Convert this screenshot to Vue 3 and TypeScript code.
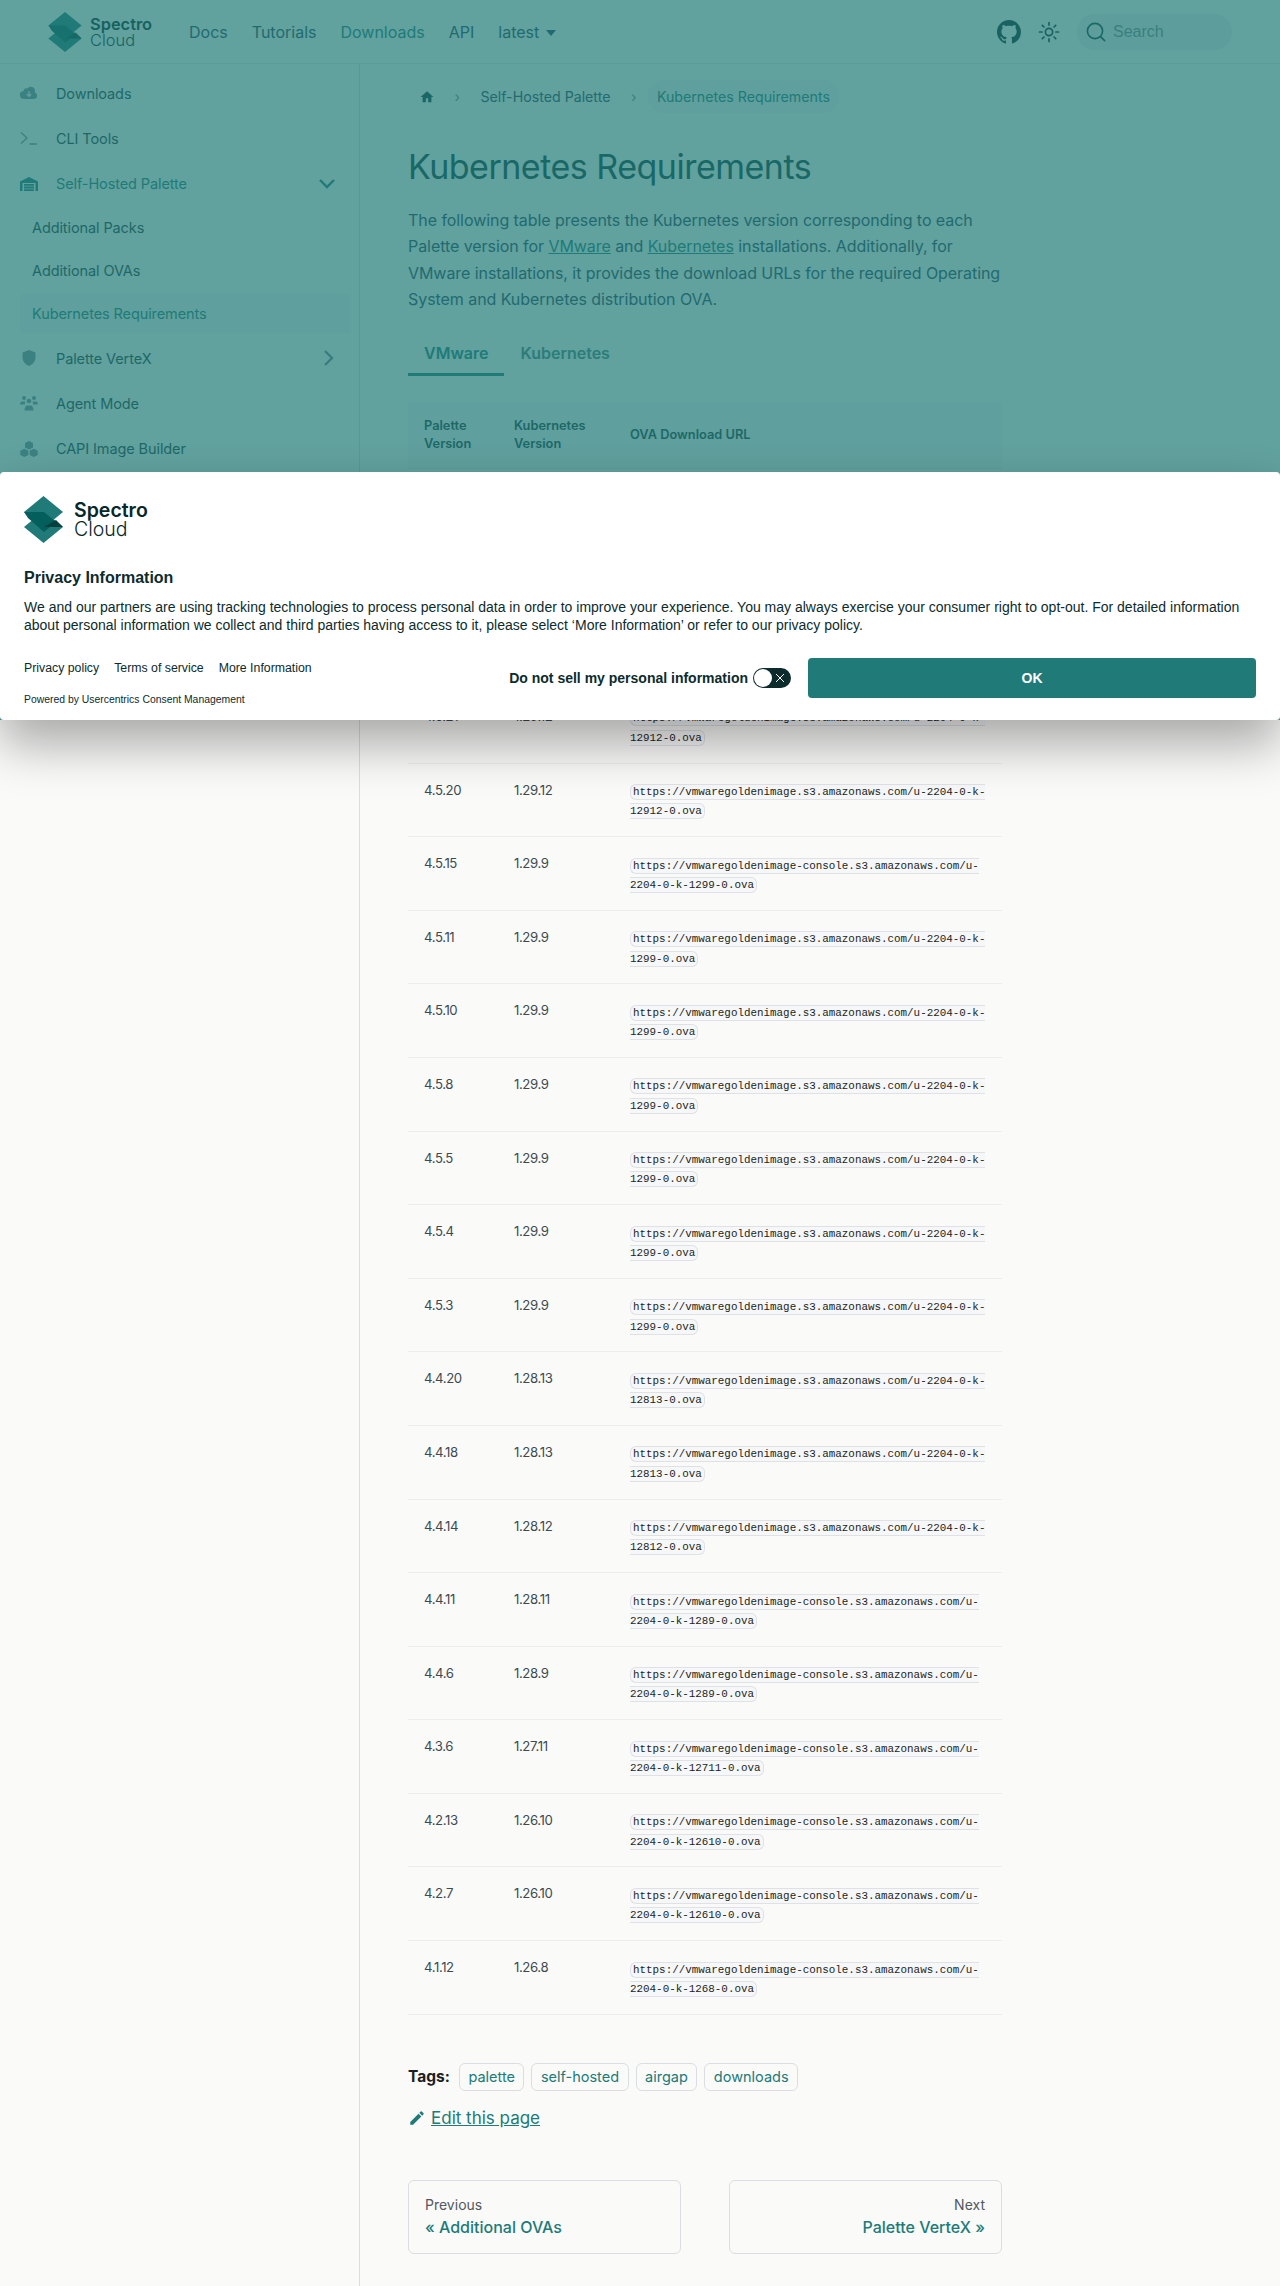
<script setup lang="ts">
interface Row {
  palette: string;
  k8s: string;
  url: string;
}

const S3 = 'https://vmwaregoldenimage.s3.amazonaws.com/u-2204-0-k-';
const CONSOLE = 'https://vmwaregoldenimage-console.s3.amazonaws.com/u-2204-0-k-';

const navLinks = ['Docs', 'Tutorials', 'Downloads', 'API'];

const rows: Row[] = [
  { palette: '4.6.6', k8s: '1.30.4', url: S3 + '13040-0.ova' },
  { palette: '4.5.23', k8s: '1.30.4', url: S3 + '13040-0.ova' },
  { palette: '4.5.22', k8s: '1.29.12', url: S3 + '12912-0.ova' },
  { palette: '4.5.21', k8s: '1.29.12', url: S3 + '12912-0.ova' },
  { palette: '4.5.20', k8s: '1.29.12', url: S3 + '12912-0.ova' },
  { palette: '4.5.15', k8s: '1.29.9', url: CONSOLE + '1299-0.ova' },
  { palette: '4.5.11', k8s: '1.29.9', url: S3 + '1299-0.ova' },
  { palette: '4.5.10', k8s: '1.29.9', url: S3 + '1299-0.ova' },
  { palette: '4.5.8', k8s: '1.29.9', url: S3 + '1299-0.ova' },
  { palette: '4.5.5', k8s: '1.29.9', url: S3 + '1299-0.ova' },
  { palette: '4.5.4', k8s: '1.29.9', url: S3 + '1299-0.ova' },
  { palette: '4.5.3', k8s: '1.29.9', url: S3 + '1299-0.ova' },
  { palette: '4.4.20', k8s: '1.28.13', url: S3 + '12813-0.ova' },
  { palette: '4.4.18', k8s: '1.28.13', url: S3 + '12813-0.ova' },
  { palette: '4.4.14', k8s: '1.28.12', url: S3 + '12812-0.ova' },
  { palette: '4.4.11', k8s: '1.28.11', url: CONSOLE + '1289-0.ova' },
  { palette: '4.4.6', k8s: '1.28.9', url: CONSOLE + '1289-0.ova' },
  { palette: '4.3.6', k8s: '1.27.11', url: CONSOLE + '12711-0.ova' },
  { palette: '4.2.13', k8s: '1.26.10', url: CONSOLE + '12610-0.ova' },
  { palette: '4.2.7', k8s: '1.26.10', url: CONSOLE + '12610-0.ova' },
  { palette: '4.1.12', k8s: '1.26.8', url: CONSOLE + '1268-0.ova' }
];

const tags = ['palette', 'self-hosted', 'airgap', 'downloads'];
</script>

<template>
  <div class="page">
    <header class="navbar">
      <div class="brand">
        <svg class="logo-mark" viewBox="0 0 39 47" width="34" height="40">
          <path d="M0 31 19.5 15 39 31 19.5 47Z" fill="#207a78" />
          <path d="M19.5 0 39 16 19.5 32 0 16Z" fill="#207a78" />
          <path d="M4.5 16H20l12 10-12 10L4 22 0 16Z" fill="#045e5c" />
          <path d="M32 24l7 7H20Z" fill="#06403f" />
        </svg>
        <div class="logo-text"><b>Spectro</b><span>Cloud</span></div>
      </div>
      <nav class="nav-links">
        <a v-for="l in navLinks" :key="l" :class="{ current: l === 'Downloads' }">{{ l }}</a>
        <a class="version">latest <i class="caret"></i></a>
      </nav>
      <div class="nav-right">
        <svg width="24" height="24" viewBox="0 0 16 16" fill="#0b2b2c">
          <path d="M8 0C3.58 0 0 3.58 0 8c0 3.54 2.29 6.53 5.47 7.59.4.07.55-.17.55-.38 0-.19-.01-.82-.01-1.49-2.01.37-2.53-.49-2.69-.94-.09-.23-.48-.94-.82-1.13-.28-.15-.68-.52-.01-.53.63-.01 1.08.58 1.23.82.72 1.21 1.87.87 2.33.66.07-.52.28-.87.51-1.07-1.78-.2-3.64-.89-3.64-3.95 0-.87.31-1.59.82-2.15-.08-.2-.36-1.02.08-2.12 0 0 .67-.21 2.2.82.64-.18 1.32-.27 2-.27s1.36.09 2 .27c1.53-1.04 2.2-.82 2.2-.82.44 1.1.16 1.92.08 2.12.51.56.82 1.27.82 2.15 0 3.07-1.87 3.75-3.65 3.95.29.25.54.73.54 1.48 0 1.07-.01 1.93-.01 2.2 0 .21.15.46.55.38A8.01 8.01 0 0 0 16 8c0-4.42-3.58-8-8-8Z" />
        </svg>
        <svg class="sun" width="24" height="24" viewBox="0 0 24 24" fill="none" stroke="#0b2b2c" stroke-width="1.7" stroke-linecap="round">
          <circle cx="12" cy="12" r="3.6" />
          <path d="M12 2.5v2.6M12 18.9v2.6M2.5 12h2.6M18.9 12h2.6M5.3 5.3 7 7M17 17l1.7 1.7M5.3 18.7 7 17M17 7l1.7-1.7" />
        </svg>
        <div class="search">
          <svg width="20" height="20" viewBox="0 0 20 20" fill="none" stroke="#0b3f40" stroke-width="1.6" stroke-linecap="round">
            <circle cx="9" cy="9" r="7.6" />
            <path d="m14.6 14.6 4 4" />
          </svg>
          <span>Search</span>
        </div>
      </div>
    </header>

    <div class="layout">
      <aside class="sidebar">
        <a class="side-item">
          <svg class="side-icon" viewBox="0 0 18 14" fill="#7f8f9c">
            <path d="M14.6 6.2A4 4 0 0 0 15 5a4.2 4.2 0 0 0-7.6-2.5A2.7 2.7 0 0 0 3.6 5 3.9 3.9 0 0 0 4 13h10.4a3.5 3.5 0 0 0 .2-6.8Z" />
            <path d="M9 5v5M6.8 8 9 10.3 11.2 8" fill="none" stroke="#fafaf9" stroke-width="1.2" />
          </svg>
          <span>Downloads</span>
        </a>
        <a class="side-item">
          <svg class="side-icon" viewBox="0 0 18 14" fill="none" stroke="#7f8f9c" stroke-width="1.3">
            <path d="M1 1.5 7 7l-6 5.5M9.5 13H17" />
          </svg>
          <span>CLI Tools</span>
        </a>
        <a class="side-item active">
          <svg class="side-icon" viewBox="0 0 18 14" fill="#207a78">
            <path d="M0 14V4.5L9 0l9 4.5V14h-2.5V6h-13v8Z" />
            <path d="M4 7h10v1.8H4ZM4 9.6h10v1.8H4ZM4 12.2h10V14H4Z" />
          </svg>
          <span>Self-Hosted Palette</span>
          <svg class="chev down" width="18" height="12" viewBox="0 0 18 12" fill="none" stroke="#207a78" stroke-width="2.4">
            <path d="m2 2 7 7 7-7" />
          </svg>
        </a>
        <a class="side-sub">Additional Packs</a>
        <a class="side-sub">Additional OVAs</a>
        <a class="side-sub selected">Kubernetes Requirements</a>
        <a class="side-item vertex">
          <svg class="side-icon" viewBox="0 0 18 16" fill="#7f8f9c">
            <path d="M9 0 2.5 2.4v5C2.5 11.5 6 14.8 9 16c3-1.2 6.5-4.5 6.5-8.6v-5Z" />
          </svg>
          <span>Palette VerteX</span>
          <svg class="chev" width="12" height="18" viewBox="0 0 12 18" fill="none" stroke="#6b7f8c" stroke-width="2.2">
            <path d="m2 2 7 7-7 7" />
          </svg>
        </a>
        <a class="side-item">
          <svg class="side-icon" viewBox="0 0 18 15" fill="#7f8f9c">
            <circle cx="4" cy="2.5" r="2" />
            <circle cx="14" cy="2.5" r="2" />
            <circle cx="9" cy="5.5" r="2.3" />
            <path d="M0 9c0-2 1-3 2.5-3h3C4.8 7 5 8 5 9ZM18 9c0-2-1-3-2.5-3h-3c.7 1 .5 2 .5 3ZM4.5 15c0-3.5 1.5-5 3-5h3c1.5 0 3 1.5 3 5Z" />
          </svg>
          <span>Agent Mode</span>
        </a>
        <a class="side-item">
          <svg class="side-icon" viewBox="0 0 18 16" fill="#7f8f9c">
            <path d="m9 0 4 2v4.5L9 8.5l-4-2V2ZM4.3 7.8l4 2v4.3L4.3 16 .3 14.1V9.8ZM13.7 7.8l4 2v4.3l-4 1.900-4-1.900V9.8Z" />
          </svg>
          <span>CAPI Image Builder</span>
        </a>
      </aside>

      <main class="content">
        <div class="crumbs">
          <svg width="14" height="14" viewBox="0 0 24 24" fill="#0b3f40"><path d="M10 21v-7h4v7h5.5v-9H23L12 2 1 12h3.5v9Z" /></svg>
          <i class="sep">›</i>
          <a>Self-Hosted Palette</a>
          <i class="sep">›</i>
          <a class="crumb-current">Kubernetes Requirements</a>
        </div>

        <h1>Kubernetes Requirements</h1>
        <p class="intro">
          The following table presents the Kubernetes version corresponding to each Palette version for
          <a>VMware</a> and <a>Kubernetes</a> installations. Additionally, for VMware installations, it provides
          the download URLs for the required Operating System and Kubernetes distribution OVA.
        </p>

        <div class="tabs">
          <span class="tab on">VMware</span>
          <span class="tab">Kubernetes</span>
        </div>

        <table>
          <thead>
            <tr>
              <th>Palette Version</th>
              <th>Kubernetes Version</th>
              <th>OVA Download URL</th>
            </tr>
          </thead>
          <tbody>
            <tr v-for="r in rows" :key="r.palette">
              <td>{{ r.palette }}</td>
              <td>{{ r.k8s }}</td>
              <td><code>{{ r.url }}</code></td>
            </tr>
          </tbody>
        </table>

        <div class="tags">
          <b>Tags:</b>
          <a v-for="t in tags" :key="t" class="tag">{{ t }}</a>
        </div>

        <a class="edit">
          <svg width="18" height="18" viewBox="0 0 24 24" fill="#207a78"><path d="M3 17.25V21h3.75L17.81 9.94l-3.75-3.75ZM20.71 7.04a1 1 0 0 0 0-1.41l-2.34-2.34a1 1 0 0 0-1.41 0l-1.83 1.83 3.75 3.75Z" /></svg>
          <span>Edit this page</span>
        </a>

        <div class="pager">
          <a class="pager-card">
            <small>Previous</small>
            <strong>« Additional OVAs</strong>
          </a>
          <a class="pager-card right">
            <small>Next</small>
            <strong>Palette VerteX »</strong>
          </a>
        </div>
      </main>
    </div>

    <div class="overlay"></div>

    <section class="consent">
      <div class="consent-logo">
        <svg viewBox="0 0 39 47" width="39" height="47">
          <path d="M0 31 19.5 15 39 31 19.5 47Z" fill="#207a78" />
          <path d="M19.5 0 39 16 19.5 32 0 16Z" fill="#207a78" />
          <path d="M4.5 16H20l12 10-12 10L4 22 0 16Z" fill="#045e5c" />
          <path d="M32 24l7 7H20Z" fill="#06403f" />
        </svg>
        <div class="consent-logo-text"><b>Spectro</b><span>Cloud</span></div>
      </div>
      <h2>Privacy Information</h2>
      <p>We and our partners are using tracking technologies to process personal data in order to improve your experience. You may always exercise your consumer right to opt-out. For detailed information about personal information we collect and third parties having access to it, please select ‘More Information’ or refer to our privacy policy.</p>
      <div class="consent-foot">
        <div>
          <div class="consent-links">
            <a>Privacy policy</a>
            <a>Terms of service</a>
            <a>More Information</a>
          </div>
          <div class="powered">Powered by Usercentrics Consent Management</div>
        </div>
        <div class="consent-actions">
          <label>Do not sell my personal information</label>
          <div class="toggle">
            <i class="knob"></i>
            <svg width="10" height="10" viewBox="0 0 10 10" stroke="#fff" stroke-width="1"><path d="m1 1 8 8M9 1 1 9" /></svg>
          </div>
          <button>OK</button>
        </div>
      </div>
    </section>
  </div>
</template>

<style>
body {
  background: #fafaf9;
}
</style>

<style scoped>
.page {
  position: relative;
  height: 2286px;
  overflow: hidden;
  background: #fafaf9;
  color: #1c1e21;
  font-family: Inter, "Noto Sans", sans-serif;
}

a {
  color: inherit;
  text-decoration: none;
}

.navbar {
  height: 64px;
  box-sizing: border-box;
  display: flex;
  align-items: center;
  padding: 0 48px;
  border-bottom: 1px solid #e6e8ec;
  background: #fafaf9;
}

.brand {
  display: flex;
  align-items: center;
  gap: 8px;
  width: 141px;
}

.logo-mark {
  flex-shrink: 0;
}

.logo-text {
  display: flex;
  flex-direction: column;
  font-size: 16.4px;
  line-height: 16px;
  color: #06282a;
}

.logo-text b {
  font-weight: 600;
}

.logo-text span {
  font-weight: 300;
}

.nav-links {
  display: flex;
  gap: 24px;
  font-size: 16px;
  color: #29445a;
}

.nav-links .current {
  color: #207a78;
}

.caret {
  display: inline-block;
  border: 5.5px solid transparent;
  border-top: 6px solid currentColor;
  border-bottom: 0;
  margin-left: 2px;
  vertical-align: 2px;
}

.nav-right {
  margin-left: auto;
  display: flex;
  align-items: center;
}

.sun {
  margin-left: 16px;
}

.search {
  margin-left: 16px;
  width: 155px;
  height: 36px;
  box-sizing: border-box;
  border-radius: 18px;
  background: #edf0f0;
  display: flex;
  align-items: center;
  gap: 7px;
  padding-left: 9px;
  font-family: "Liberation Sans", sans-serif;
  font-size: 16px;
  color: #7b8a8c;
}

.layout {
  display: flex;
}

.sidebar {
  width: 360px;
  box-sizing: border-box;
  height: 2222px;
  border-right: 1px solid #dadde1;
  padding: 6.5px 9px 0 20px;
  font-size: 14.5px;
  color: #1d3b3c;
  letter-spacing: -0.1px;
}

.side-item {
  height: 45.3px;
  display: flex;
  align-items: center;
  gap: 18px;
}

.side-icon {
  width: 18px;
  height: 18px;
  flex-shrink: 0;
}

.side-item.active {
  color: #207a78;
}

.chev {
  margin-left: auto;
  margin-right: 15px;
}

.chev.down {
  margin-right: 14px;
}

.side-sub {
  display: flex;
  align-items: center;
  height: 43px;
  padding-left: 12px;
}

.side-sub.selected {
  height: 39px;
  margin: 2px 0;
  background: #f4f5f5;
  color: #207a78;
}

.side-item.vertex {
  margin-top: 2px;
}

.content {
  width: 594px;
  margin-left: 48px;
  padding-top: 16px;
}

.crumbs {
  display: flex;
  align-items: center;
  height: 33px;
  font-size: 14.2px;
  color: #29445a;
  padding-left: 12px;
}

.crumbs .sep {
  font-style: normal;
  color: #7c8a8c;
  margin: 0 20.5px;
}

.crumb-current {
  color: #207a78;
  background: #f4f5f5;
  padding: 0 9px;
  height: 33px;
  line-height: 33px;
  border-radius: 16px;
  margin-left: -9px;
}

h1 {
  margin: 30px 0 0;
  font-size: 34px;
  line-height: 48px;
  font-weight: 400;
  color: #0c3c3e;
  letter-spacing: -0.5px;
}

.intro {
  margin: 16px 0 0;
  font-size: 16px;
  line-height: 26.3px;
  letter-spacing: -0.06px;
  color: #29445a;
}

.intro a {
  color: #207a78;
  text-decoration: underline;
}

.tabs {
  display: flex;
  margin-top: 18px;
  height: 46px;
}

.tab {
  padding: 0 16px;
  line-height: 46px;
  font-size: 16px;
  font-weight: 600;
  color: #4c7f80;
}

.tab.on {
  color: #207a78;
  border-bottom: 3px solid #207a78;
}

table {
  width: 594px;
  margin-top: 26px;
  border-collapse: collapse;
  table-layout: fixed;
  font-size: 13.2px;
  letter-spacing: -0.4px;
}

th:nth-child(1) {
  width: 90px;
}

th:nth-child(2) {
  width: 116px;
}

th,
td {
  box-sizing: border-box;
}

th {
  background: #f3f4f4;
  text-align: left;
  padding: 15px 16px 15px;
  font-size: 12.8px;
  line-height: 18px;
  font-weight: 600;
  letter-spacing: 0;
  color: #1d3b3c;
  border-bottom: 1px solid #e6e8ec;
}

td {
  padding: 16px;
  line-height: 20px;
  vertical-align: top;
  color: #3c4a50;
  border-bottom: 1px solid #eceeee;
  font-weight: 400;
}

td:nth-child(3) {
  padding-top: 17.5px;
  padding-bottom: 16.5px;
  line-height: 19.3px;
  letter-spacing: 0;
}

code {
  font-family: "Liberation Mono", monospace;
  font-size: 10.88px;
  line-height: 1;
  color: #1c1e21;
  background: #f6f7f8;
  border: 1px solid #dfe1e5;
  border-radius: 6px;
  padding: 1px 2px;
}

.tags {
  display: flex;
  align-items: center;
  margin-top: 48px;
  font-size: 15.5px;
}

.tags b {
  font-weight: 700;
  margin-right: 9px;
  color: #1c1e21;
}

.tag {
  height: 28px;
  line-height: 26px;
  box-sizing: border-box;
  border: 1px solid #dadde1;
  border-radius: 6px;
  padding: 0 8.5px;
  margin-right: 7px;
  font-size: 14.5px;
  color: #207a78;
}

.edit {
  display: flex;
  align-items: center;
  gap: 5px;
  margin-top: 15px;
  font-size: 17px;
  line-height: 24px;
  color: #207a78;
}

.edit span {
  text-decoration: underline;
}

.pager {
  display: grid;
  grid-template-columns: 273px 273px;
  justify-content: space-between;
  margin-top: 50px;
}

.pager-card {
  height: 74px;
  box-sizing: border-box;
  border: 1px solid #dadde1;
  border-radius: 6px;
  padding: 14px 16px;
  display: flex;
  flex-direction: column;
}

.pager-card.right {
  text-align: right;
}

.pager-card small {
  font-size: 14px;
  line-height: 20px;
  color: #525860;
}

.pager-card strong {
  font-size: 16px;
  line-height: 24px;
  font-weight: 500;
  color: #207a78;
}

.overlay {
  position: absolute;
  top: 0;
  left: 0;
  right: 0;
  height: 720px;
  background: rgba(32, 122, 120, 0.7);
}

.consent {
  position: absolute;
  top: 472px;
  left: 0;
  right: 0;
  height: 248px;
  box-sizing: border-box;
  padding: 24px;
  background: #fff;
  border-radius: 4px;
  box-shadow: 0 24px 50px rgba(0, 0, 0, 0.33);
  font-family: "Liberation Sans", sans-serif;
  color: #0c2b2c;
}

.consent-logo {
  display: flex;
  align-items: center;
  gap: 11px;
  height: 47px;
}

.consent-logo-text {
  display: flex;
  flex-direction: column;
  font-family: Inter, sans-serif;
  font-size: 19.5px;
  line-height: 19px;
  color: #06282a;
}

.consent-logo-text b {
  font-weight: 600;
}

.consent-logo-text span {
  font-weight: 300;
}

.consent h2 {
  margin: 25px 0 0;
  font-size: 16px;
  line-height: 20px;
  font-weight: 700;
}

.consent p {
  margin: 10px 0 0;
  font-size: 14px;
  line-height: 18px;
  color: #0c2b2c;
}

.consent-foot {
  display: flex;
  justify-content: space-between;
  margin-top: 24px;
}

.consent-links {
  display: flex;
  gap: 15px;
  padding-top: 3px;
  font-size: 12.3px;
  line-height: 14px;
}

.powered {
  margin-top: 18px;
  font-size: 10.4px;
  line-height: 13px;
}

.consent-actions {
  display: flex;
  align-items: center;
  height: 40px;
}

.consent-actions label {
  font-size: 14px;
  font-weight: 700;
}

.toggle {
  width: 38px;
  height: 20px;
  margin: 0 17px 0 5px;
  box-sizing: border-box;
  border-radius: 10px;
  background: #0c2b2c;
  display: flex;
  align-items: center;
  justify-content: space-between;
  padding: 0 6px 0 1px;
}

.knob {
  width: 18px;
  height: 18px;
  border-radius: 50%;
  background: #fff;
}

.consent-actions button {
  width: 448px;
  height: 40px;
  border: 0;
  border-radius: 4px;
  background: #207a78;
  color: #fff;
  font-family: inherit;
  font-size: 14px;
  font-weight: 700;
}
</style>
